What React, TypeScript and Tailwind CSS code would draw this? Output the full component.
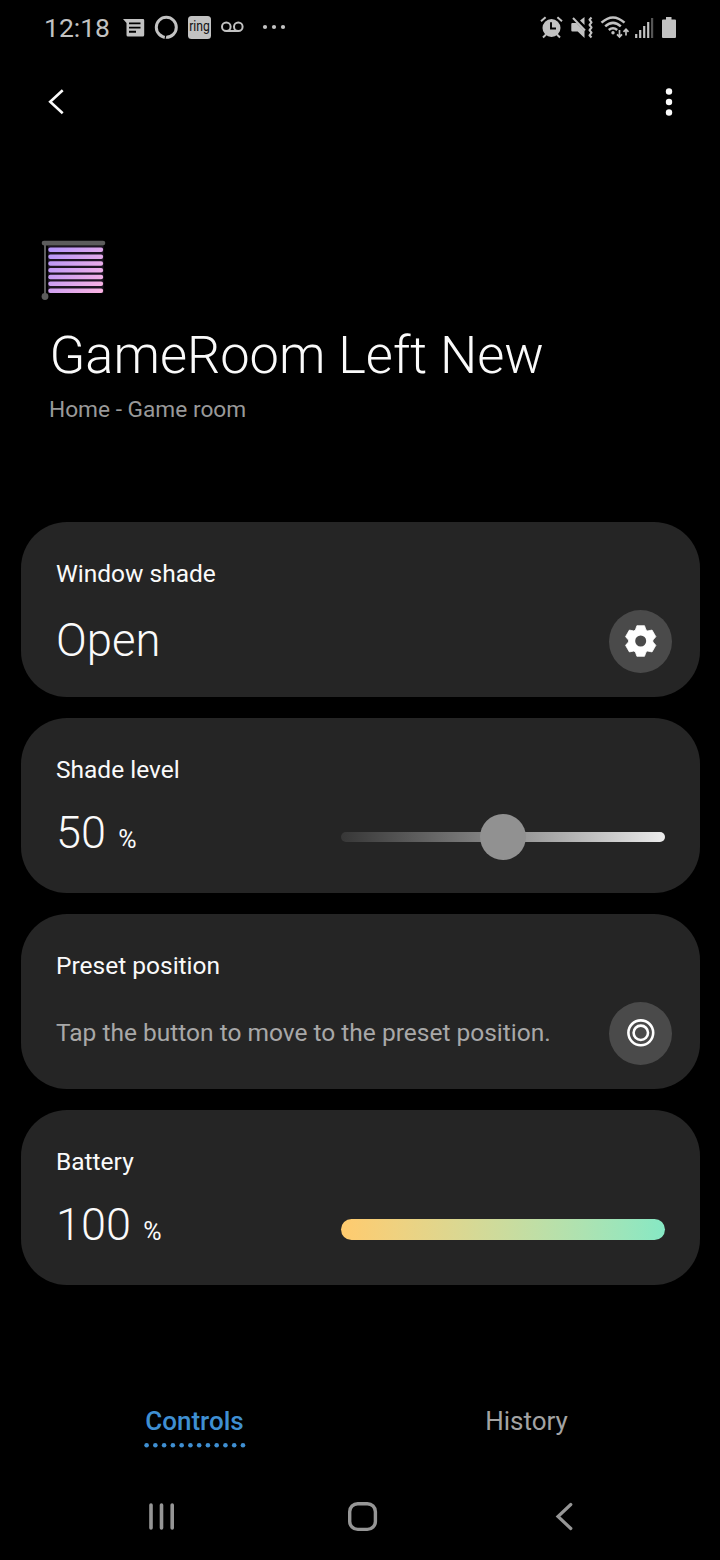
import type { ReactNode } from 'react';

function StatusLeft() {
  return (
    <svg width="190" height="54" viewBox="110 0 190 54" fill="#c2c2c2">
      <path d="M123 19h20q1.200 0 1.200 1.200v14.800q0 1.500-1.500 1.500h-14.700q-1.500 0-1.500-1.500V23z" />
      <path d="M129 23.400h11.500M129 27.600h11.500M129 31.800h7" stroke="#000" strokeWidth="1.900" />
      <circle cx="166.300" cy="27.300" r="10" fill="none" stroke="#c2c2c2" strokeWidth="3" />
      <path d="M162.800 34.500l3 .800-.700 3.500" fill="none" stroke="#000" strokeWidth="1.200" />
      <rect x="188" y="16" width="23" height="23" rx="3.500" />
      <text x="189.200" y="31.300" fill="#111" fontFamily="Roboto, sans-serif" fontSize="14.500" textLength="20.600" lengthAdjust="spacingAndGlyphs">ring</text>
      <g fill="none" stroke="#c2c2c2" strokeWidth="2">
        <circle cx="226.300" cy="26.700" r="4.300" />
        <circle cx="238.300" cy="26.700" r="4.300" />
        <path d="M226.300 31h12" />
      </g>
      <circle cx="265" cy="27" r="2.100" /><circle cx="274" cy="27" r="2.100" /><circle cx="283" cy="27" r="2.100" />
    </svg>
  );
}

function StatusRight() {
  return (
    <svg width="150" height="54" viewBox="535 0 150 54" fill="none" stroke="#c2c2c2">
      <circle cx="551.500" cy="28" r="9" fill="#c2c2c2" stroke="none" />
      <path d="M541 21.300l4.600-4M562 21.300l-4.600-4M546 34.500l-3 3M557 34.500l3 3" strokeWidth="2" />
      <path d="M551 22.200v6.300h5" stroke="#000" strokeWidth="1.900" />
      <path d="M571.300 24q0-1 1-1h4.200l8 8v7l-6.800-6.600h-5.400q-1 0-1-1zM580 20.500l4.500-3.500v8z" fill="#c2c2c2" stroke="none" />
      <path d="M573 18l12 12.500" strokeWidth="2" />
      <path d="M591.500 17.500l-2 2.200 2 2.600-2 2.600 2 2.600-2 2.600 2 2.600-2 2.600 2 2.200" strokeWidth="2.100" strokeLinejoin="round" />
      <path d="M601.500 22.700q11.500-10.500 23 0M605.200 26.400q7.800-7 15.600 0M608.800 30q4.200-3.600 8.400 0" strokeWidth="2.500" />
      <circle cx="613" cy="32.800" r="1.700" fill="#c2c2c2" stroke="none" />
      <path d="M619.500 30v6.500M617 34.300l2.500 2.600 2.500-2.600M626 35.500v-6M623.500 31.800l2.500-2.600 2.500 2.600" strokeWidth="1.700" />
      <path d="M636.200 34v4M640.200 30v8M644.200 26v12M648.200 22v16" strokeWidth="2.200" />
      <path d="M652.100 18v20" stroke="#555" strokeWidth="2.200" />
      <path d="M666 17h5.500v2.500h3.500q1 0 1 1V37q0 1-1 1h-12q-1 0-1-1V20.500q0-1 1-1h3z" fill="#c2c2c2" stroke="none" />
    </svg>
  );
}

const slats = [247.6, 254.4, 261.2, 268, 274.8, 281.6, 288.4];

function BlindsIcon() {
  return (
    <svg className="block" width="66" height="62" viewBox="41 239 66 62">
      <defs>
        <linearGradient id="slat" gradientUnits="userSpaceOnUse" x1="48" y1="247" x2="103" y2="293">
          <stop stopColor="#b294fb" />
          <stop offset="1" stopColor="#fcb4e2" />
        </linearGradient>
      </defs>
      <rect x="48" y="246" width="55.500" height="47" fill="#1c1422" />
      <path d="M45 243v53" stroke="#5c5c5c" strokeWidth="2" />
      <rect x="41.700" y="240.700" width="63.600" height="4.700" rx="2.300" fill="#5c5c5c" />
      <circle cx="45" cy="296.500" r="3.400" fill="#5c5c5c" />
      {slats.map((y) => (
        <rect key={y} x="48.300" y={y} width="54.800" height="4.500" rx="2" fill="url(#slat)" />
      ))}
    </svg>
  );
}

function Card({ label, children }: { label: string; children: ReactNode }) {
  return (
    <section className="h-[175px] rounded-[46px] bg-[#252525] pl-[35px] pr-7 pt-[37px]">
      <h2 className="h-[30px] text-[24.500px] leading-[29px] text-[#fafafa]">{label}</h2>
      {children}
    </section>
  );
}

function RoundButton({ children }: { children: ReactNode }) {
  return (
    <button className="flex size-[63px] shrink-0 items-center justify-center rounded-full bg-[#4a4a4a]">
      {children}
    </button>
  );
}

function Percent({ value }: { value: string }) {
  return (
    <div className="flex h-[54px] items-baseline gap-3 leading-[54px] text-[#fafafa]">
      <span className="text-[45px] font-light tracking-[0.100px]">{value}</span>
      <span className="text-[25px]">%</span>
    </div>
  );
}

export default function App() {
  return (
    <div className="flex h-[1560px] w-[720px] flex-col bg-black font-[Roboto,sans-serif]">
      <header className="flex h-[54px] items-center justify-between pl-11 pr-[35px]">
        <div className="flex items-center">
          <span className="w-[66px] whitespace-nowrap pt-0.5 text-[26.500px] leading-[54px] text-[#c2c2c2]">12:18</span>
          <StatusLeft />
        </div>
        <StatusRight />
      </header>

      <div className="flex h-24 items-center justify-between pl-[46px] pr-[41px]">
        <svg width="20" height="30" viewBox="46 87 20 30" fill="none" stroke="#fafafa" strokeWidth="2.600">
          <path d="M62.700 90.300L50.200 101.800l12.500 11.500" />
        </svg>
        <svg width="20" height="30" viewBox="659 87 20 30" fill="#fafafa">
          <circle cx="669" cy="91.500" r="3.200" /><circle cx="669" cy="102" r="3.200" /><circle cx="669" cy="112.500" r="3.200" />
        </svg>
      </div>

      <div className="h-[372px] pt-[89px]">
        <div className="pl-[41px]"><BlindsIcon /></div>
        <h1 className="mt-6 pl-[49.500px] text-[52.400px] font-light leading-[60px] text-[#fafafa]">GameRoom Left New</h1>
        <p className="mt-2.5 pl-[49px] text-[22.700px] leading-[30px] text-[#999]">Home - Game room</p>
      </div>

      <main className="flex flex-col gap-[21px] pl-[21px] pr-5">
        <Card label="Window shade">
          <div className="flex items-start justify-between pt-[21px]">
            <span className="mt-1 text-[45.400px] font-light leading-[54px] text-[#fafafa]">Open</span>
            <RoundButton>
              <svg width="39" height="39" viewBox="-19.700 -19 39 39" fill="#fff" stroke="#fff" strokeWidth="0.800" strokeLinejoin="round">
                <path d="M-5.300-11L-3.800-15.300H3.800L5.300-11 6.900-10.100 11.350-10.900 15.150-4.350 12.200-.900V.900L15.150 4.350 11.350 10.900 6.900 10.100 5.300 11 3.800 15.300H-3.800L-5.300 11-6.900 10.100-11.350 10.900-15.150 4.350-12.200.900V-.900L-15.150-4.350-11.350-10.900-6.900-10.100z" />
                <circle r="5.500" fill="#4a4a4a" stroke="none" />
              </svg>
            </RoundButton>
          </div>
        </Card>
        <Card label="Shade level">
          <div className="flex justify-between pr-[7px] pt-[21px]">
            <Percent value="50" />
            <div className="mt-[8px] flex h-[46px] w-[324px] items-center justify-center">
              <div className="flex h-2.5 w-full items-center justify-center rounded-full bg-linear-to-r from-[#373737] to-[#ececec]">
                <div className="size-[46px] shrink-0 rounded-full bg-[#919191]" />
              </div>
            </div>
          </div>
        </Card>
        <Card label="Preset position">
          <div className="flex items-start justify-between pt-[21px]">
            <p className="mt-[16px] whitespace-nowrap text-[24.500px] leading-[29px] text-[#a8a8a8]">Tap the button to move to the preset position.</p>
            <RoundButton>
              <svg width="31" height="31" viewBox="0 0 31 31" fill="none" stroke="#fff" strokeWidth="2.600">
                <circle cx="15.800" cy="14.800" r="12.400" /><circle cx="15.800" cy="14.800" r="7.200" />
              </svg>
            </RoundButton>
          </div>
        </Card>
        <Card label="Battery">
          <div className="flex justify-between pr-[7px] pt-[21px]">
            <Percent value="100" />
            <div className="mt-[21px] h-[21px] w-[324px] rounded-full bg-linear-to-r from-[#ffcb6e] to-[#86e8c4]" />
          </div>
        </Card>
      </main>

      <nav className="mt-[120px] flex h-[68px] text-[26px] leading-[32px]">
        <div className="flex w-[389px] flex-col items-center">
          <span className="font-medium text-[#3f8fd2]">Controls</span>
          <svg className="mt-[5px]" width="104" height="6" fill="#3f8fd2">
            {Array.from({ length: 12 }, (_, i) => (
              <circle key={i} cx={3.6 + i * 8.76} cy="3.300" r="2.300" />
            ))}
          </svg>
        </div>
        <div className="flex w-[275px] justify-center text-[#a3a3a3]"><span>History</span></div>
      </nav>

      <footer className="flex h-[85px] items-center justify-between pl-[146px] pr-[144px]">
        <svg width="32" height="32" viewBox="146 1500 32 32" stroke="#969696" strokeWidth="3.600" strokeLinecap="round">
          <path d="M151 1505v23M161.500 1505v23M172.200 1505v23" />
        </svg>
        <svg width="32" height="32" viewBox="347 1500 32 32" fill="none" stroke="#969696" strokeWidth="3.400">
          <rect x="349.700" y="1503.700" width="25.700" height="25.700" rx="8" />
        </svg>
        <svg width="28" height="32" viewBox="548 1500 28 32" fill="none" stroke="#969696" strokeWidth="3.200" strokeLinecap="round">
          <path d="M570.800 1504.500L558 1516.500l12.800 12" />
        </svg>
      </footer>
    </div>
  );
}
